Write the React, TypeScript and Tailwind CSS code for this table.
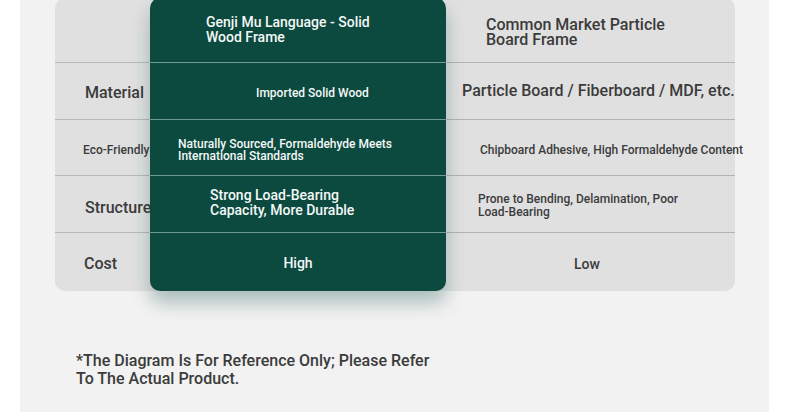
const rowHeights = ['h-[65px]', 'h-[57px]', 'h-[56px]', 'h-[57px]', 'h-[58px]']

type Cell = { text: string; className: string }

const labels: Cell[] = [
  { text: '', className: '' },
  { text: 'Material', className: 'pt-[4px] pl-[30px] text-[16px]' },
  { text: 'Eco-Friendly', className: 'pt-[4px] pl-[28px] text-[12px]' },
  { text: 'Structure', className: 'pt-[8px] pl-[30px] text-[16px]' },
  { text: 'Cost', className: 'pt-[4px] pl-[29px] text-[16px]' },
]

const ours: Cell[] = [
  { text: 'Genji Mu Language - Solid\nWood Frame', className: 'pl-[56px] text-[14px] leading-[15px]' },
  { text: 'Imported Solid Wood', className: 'pt-[4px] pl-[106px] text-[12px]' },
  { text: 'Naturally Sourced, Formaldehyde Meets\nInternational Standards', className: 'pt-[4px] pl-[28px] text-[12px] leading-[12px]' },
  { text: 'Strong Load-Bearing\nCapacity, More Durable', className: 'pb-[2px] pl-[60px] text-[14px] leading-[15px]' },
  { text: 'High', className: 'pt-[2px] justify-center text-[14px]' },
]

const theirs: Cell[] = [
  { text: 'Common Market Particle\nBoard Frame', className: 'pt-[4px] pl-[40px] text-[16px] leading-[15px]' },
  { text: 'Particle Board / Fiberboard / MDF, etc.', className: 'pl-[16px] text-[16px]' },
  { text: 'Chipboard Adhesive, High Formaldehyde Content', className: 'pt-[4px] pl-[34px] text-[12px]' },
  { text: 'Prone to Bending, Delamination, Poor\nLoad-Bearing', className: 'pt-[4px] pl-[32px] text-[12px] leading-[13px]' },
  { text: 'Low', className: 'pt-[4px] pr-[7px] justify-center text-[14px]' },
]

function Column({ cells, width, line }: { cells: Cell[]; width: string; line: string }) {
  return (
    <div className={`flex flex-col ${width}`}>
      {cells.map((c, i) => (
        <div
          key={i}
          className={`flex items-center ${rowHeights[i]} ${i < 4 ? `border-b ${line}` : ''} ${c.className}`}
        >
          <span className="whitespace-pre">{c.text}</span>
        </div>
      ))}
    </div>
  )
}

export default function App() {
  return (
    <div className="w-[790px] h-[414px] bg-white overflow-hidden font-medium" style={{ fontFamily: 'Roboto, "Liberation Sans", sans-serif' }}>
      <div className="ml-[20px] w-[749px] h-full bg-[#f2f2f2] px-[35px]">
        <div className="-mt-[2px] flex w-[680px] rounded-[10px] bg-[#e0e0e0] text-[#3b3b3b]">
          <Column cells={labels} width="w-[95px] shrink-0" line="border-[#b9b9b9]" />
          <div className="relative z-10 w-[296px] shrink-0 rounded-[10px] bg-[#0c4a3f] text-[#f4f8f7] shadow-[0_12px_18px_rgba(12,74,63,0.3)]">
            <Column cells={ours} width="w-full" line="border-[#6f9c92]" />
          </div>
          <Column cells={theirs} width="w-[289px] shrink-0" line="border-[#b4b4b4]" />
        </div>
        <p className="mt-[61px] ml-[21px] text-[16px] leading-[18px] text-[#3b3b3b]">
          *The Diagram Is For Reference Only; Please Refer
          <br />
          To The Actual Product.
        </p>
      </div>
    </div>
  )
}
